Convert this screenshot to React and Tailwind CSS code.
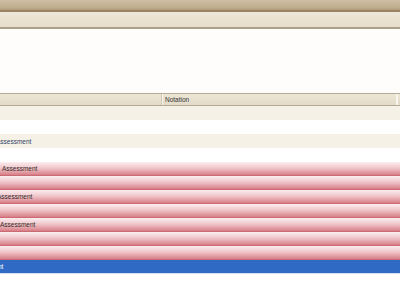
export default function App() {
  const pink = "h-[14px] bg-[linear-gradient(to_bottom,#fbeef0,#f0c7cb_45%,#e19aa1_80%,#d67d86)] border-b border-[#cc6a74] flex items-center overflow-hidden";
  return (
    <div className="w-[400px] h-[284px] overflow-hidden bg-white font-['Liberation_Sans',Arial,sans-serif] text-[6.5px] leading-none">
      <div className="h-[12px] bg-[linear-gradient(to_bottom,#cdbda2,#c2af91_70%,#b09a78)] border-b-2 border-[#9a8463]" />
      <div className="h-[17px] bg-[linear-gradient(to_bottom,#eee8da,#e6ddcb)] border-b-2 border-[#aba08a]" />
      <div className="h-[64px] bg-[#fefdfb]" />
      <div className="h-[13px] bg-[linear-gradient(to_bottom,#ece6d7,#e3dbc8)] border-t border-[#b3a994] border-b border-[#a39883] flex items-stretch">
        <div className="w-[162px] border-r border-[#cfc6b3]" />
        <div className="w-[235px] border-l border-[#f8f5ee] border-r border-[#cfc6b3] flex items-center pl-[2px] pt-[2px] text-[#333333]">Notation</div>
        <div className="flex-1 border-l border-[#f8f5ee]" />
      </div>
      <div className="h-[14px] bg-[#f6f1e6]" />
      <div className="h-[14px] bg-white" />
      <div className="h-[14px] bg-[#f6f1e6] flex items-center overflow-hidden pt-[2px]">
        <span className="ml-[-4px] text-[#2f4168]">Assessment</span>
      </div>
      <div className="h-[14px] bg-white" />
      <div className={pink}>
        <span className="ml-[2px] mt-[2px] text-[#352b2b]">Assessment</span>
      </div>
      <div className={pink} />
      <div className={pink}>
        <span className="ml-[-3px] mt-[2px] text-[#352b2b]">Assessment</span>
      </div>
      <div className={pink} />
      <div className={pink}>
        <span className="ml-[0px] mt-[2px] text-[#352b2b]">Assessment</span>
      </div>
      <div className={pink} />
      <div className={pink} />
      <div className="h-[13px] bg-[#2f6bc4] flex items-center overflow-hidden pt-[2px]">
        <span className="ml-[-32px] text-white">Assessment</span>
      </div>
      <div className="h-[1px] bg-[#d5dfec]" />
    </div>
  );
}
